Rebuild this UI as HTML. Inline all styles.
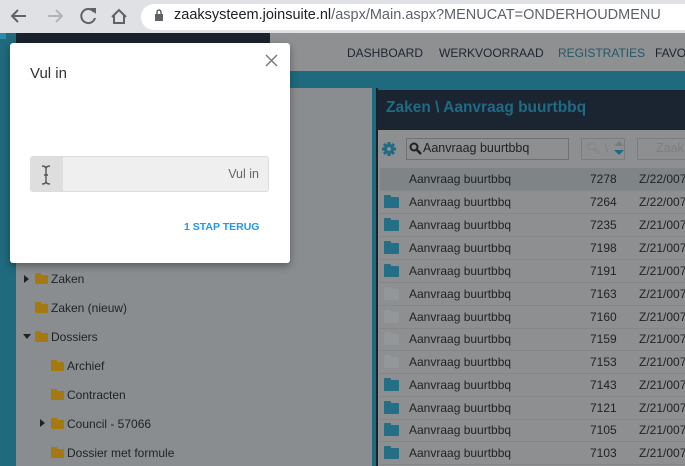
<!DOCTYPE html>
<html><head><style>
*{margin:0;padding:0;box-sizing:border-box}
body{width:685px;height:466px;overflow:hidden;font-family:"Liberation Sans",sans-serif;position:relative;background:#8e8f90}
.abs{position:absolute}
.nav{font-size:12px;color:#1c2530;top:46px}
.row{position:absolute;left:380px;width:305px;height:23px;border-bottom:1px solid #858688;font-size:12px;color:#1e2225}
.row span{position:absolute;top:4px}
.fold{position:absolute;left:4px;top:6px;width:15px;height:11px;background:#246e86;border-radius:1px}
.fold:before{content:"";position:absolute;left:0;top:-2px;width:7px;height:3px;background:inherit;border-radius:1px 1px 0 0}
.g{background:#94979a}
.tree{position:absolute;font-size:12px;color:#1e2225}
.tf{position:absolute;width:13px;height:9px;background:#a47a10;border-radius:1px}
.tf:before{content:"";position:absolute;left:0;top:-2px;width:6px;height:3px;background:#a47a10}
.tri{position:absolute;width:0;height:0}
</style></head><body>
<div class="abs" style="left:0;top:0;width:685px;height:33px;background:#dfe1e4"></div>
<div class="abs" style="left:141px;top:4px;width:560px;height:26px;background:#fff;border-radius:13px"></div>
<svg class="abs" style="left:0;top:0" width="140" height="33" viewBox="0 0 140 33">
<path d="M26 16H12M18 10l-6 6 6 6" stroke="#5f6368" stroke-width="2" fill="none"/>
<path d="M48 16h14M56 10l6 6-6 6" stroke="#b0b3b7" stroke-width="2" fill="none"/>
<path d="M94 12a7 7 0 1 0 1 6" stroke="#5f6368" stroke-width="2" fill="none"/><path d="M90 8h6v6z" fill="#5f6368"/>
<path d="M112 17l7-7 7 7M114 15v8h10v-8" stroke="#5f6368" stroke-width="2" fill="none"/>
</svg>
<svg class="abs" style="left:154px;top:9px" width="10" height="13"><rect x="1" y="5" width="8" height="7" fill="#5f6368"/><path d="M3 5V3a2 2 0 0 1 4 0v2" stroke="#5f6368" stroke-width="1.5" fill="none"/></svg>
<div class="abs" style="left:174px;top:7px;font-size:14.5px;color:#202124;white-space:nowrap">zaaksysteem.joinsuite.nl<span style="color:#5f6368">/aspx/Main.aspx?MENUCAT=ONDERHOUDMENU</span></div>

<div class="abs" style="left:0;top:33px;width:16px;height:433px;background:#1f6a7d"></div>
<div class="abs" style="left:0;top:33px;width:6px;height:6px;background:#2b8ab0"></div>
<div class="abs" style="left:16px;top:33px;width:254px;height:40px;background:#1a222d"></div>
<div class="abs" style="left:270px;top:33px;width:415px;height:38px;background:#8f9091"></div>
<div class="abs nav" style="left:347px">DASHBOARD</div>
<div class="abs nav" style="left:439px">WERKVOORRAAD</div>
<div class="abs nav" style="left:558px;color:#24586a">REGISTRATIES</div>
<div class="abs nav" style="left:655px">FAVO</div>
<div class="abs" style="left:16px;top:71px;width:669px;height:19px;background:#1f6a7d"></div>
<div class="abs" style="left:16px;top:88px;width:356px;height:378px;background:#8a8d90"></div>
<div class="abs" style="left:372px;top:88px;width:6px;height:378px;background:#1f6a7d;border-right:2px solid #1a222d"></div>
<div class="abs" style="left:378px;top:90px;width:307px;height:40px;background:#1b2532"></div>
<div class="abs" style="left:386px;top:99px;font-size:15.5px;font-weight:bold;color:#1f6a85">Zaken \ Aanvraag buurtbbq</div>
<div class="abs" style="left:378px;top:130px;width:307px;height:38px;background:#8d8f91"></div>
<svg class="abs" style="left:381px;top:141px" width="16" height="16" viewBox="0 0 16 16"><g stroke="#1f6a85" stroke-width="3"><path d="M8 1v14M1 8h14M3 3l10 10M13 3L3 13"/></g><circle cx="8" cy="8" r="5" fill="#1f6a85"/><circle cx="8" cy="8" r="2" fill="#8d8f91"/></svg>
<div class="abs" style="left:406px;top:138px;width:163px;height:22px;border:1px solid #6f7275;background:#8d8f91;font-size:12.5px;color:#1e2225;padding:2px 0 0 16px">Aanvraag buurtbbq</div>
<svg class="abs" style="left:409px;top:142px" width="13" height="13"><circle cx="5" cy="5" r="3.5" stroke="#1e2225" stroke-width="2" fill="none"/><path d="M8 8l4 4" stroke="#1e2225" stroke-width="2.5"/></svg>
<div class="abs" style="left:581px;top:138px;width:44px;height:22px;border:1px solid #7a7d80"></div>
<div class="abs" style="left:586px;top:141px;font-size:12px;color:#7c7f82">🔍︎ \</div>
<div class="abs tri" style="left:614px;top:141px;border:5px solid transparent;border-bottom-color:#7a7d80;border-top:0"></div>
<div class="abs tri" style="left:614px;top:150px;border:5px solid transparent;border-top-color:#1f6a85;border-bottom:0"></div>
<div class="abs" style="left:637px;top:138px;width:50px;height:22px;border:1px solid #7a7d80;font-size:12.5px;color:#7c7f82;padding:2px 0 0 18px">Zaak</div>

<div class="row" style="top:168px;background:#7f8487"><span style="left:29px">Aanvraag buurtbbq</span><span style="left:210px">7278</span><span style="left:259px">Z/22/007</span></div>
<div class="row" style="top:191px"><i class="fold"></i><span style="left:29px">Aanvraag buurtbbq</span><span style="left:210px">7264</span><span style="left:259px">Z/22/007</span></div>
<div class="row" style="top:214px"><i class="fold"></i><span style="left:29px">Aanvraag buurtbbq</span><span style="left:210px">7235</span><span style="left:259px">Z/21/007</span></div>
<div class="row" style="top:237px"><i class="fold"></i><span style="left:29px">Aanvraag buurtbbq</span><span style="left:210px">7198</span><span style="left:259px">Z/21/007</span></div>
<div class="row" style="top:260px"><i class="fold"></i><span style="left:29px">Aanvraag buurtbbq</span><span style="left:210px">7191</span><span style="left:259px">Z/21/007</span></div>
<div class="row" style="top:283px"><i class="fold g"></i><span style="left:29px">Aanvraag buurtbbq</span><span style="left:210px">7163</span><span style="left:259px">Z/21/007</span></div>
<div class="row" style="top:306px"><i class="fold g"></i><span style="left:29px">Aanvraag buurtbbq</span><span style="left:210px">7160</span><span style="left:259px">Z/21/007</span></div>
<div class="row" style="top:328px"><i class="fold g"></i><span style="left:29px">Aanvraag buurtbbq</span><span style="left:210px">7159</span><span style="left:259px">Z/21/007</span></div>
<div class="row" style="top:351px"><i class="fold g"></i><span style="left:29px">Aanvraag buurtbbq</span><span style="left:210px">7153</span><span style="left:259px">Z/21/007</span></div>
<div class="row" style="top:374px"><i class="fold"></i><span style="left:29px">Aanvraag buurtbbq</span><span style="left:210px">7143</span><span style="left:259px">Z/21/007</span></div>
<div class="row" style="top:397px"><i class="fold"></i><span style="left:29px">Aanvraag buurtbbq</span><span style="left:210px">7121</span><span style="left:259px">Z/21/007</span></div>
<div class="row" style="top:419px"><i class="fold"></i><span style="left:29px">Aanvraag buurtbbq</span><span style="left:210px">7105</span><span style="left:259px">Z/21/007</span></div>
<div class="row" style="top:442px"><i class="fold"></i><span style="left:29px">Aanvraag buurtbbq</span><span style="left:210px">7103</span><span style="left:259px">Z/21/007</span></div>

<div class="tri" style="left:24px;top:275px;border:4px solid transparent;border-left:5px solid #1e2225;border-right:0"></div>
<i class="tf" style="left:35px;top:275px"></i><div class="tree" style="left:51px;top:272px">Zaken</div>
<i class="tf" style="left:35px;top:304px"></i><div class="tree" style="left:51px;top:301px">Zaken (nieuw)</div>
<div class="tri" style="left:23px;top:334px;border:4px solid transparent;border-top:5px solid #1e2225;border-bottom:0"></div>
<i class="tf" style="left:35px;top:333px"></i><div class="tree" style="left:51px;top:330px">Dossiers</div>
<i class="tf" style="left:51px;top:362px"></i><div class="tree" style="left:67px;top:359px">Archief</div>
<i class="tf" style="left:51px;top:391px"></i><div class="tree" style="left:67px;top:388px">Contracten</div>
<div class="tri" style="left:40px;top:419px;border:4px solid transparent;border-left:5px solid #1e2225;border-right:0"></div>
<i class="tf" style="left:51px;top:420px"></i><div class="tree" style="left:67px;top:417px">Council - 57066</div>
<i class="tf" style="left:51px;top:449px"></i><div class="tree" style="left:67px;top:446px">Dossier met formule</div>

<div class="abs" style="left:10px;top:43px;width:280px;height:220px;background:#fff;border-radius:3px;box-shadow:0 3px 8px rgba(0,0,0,.35)"></div>
<svg class="abs" style="left:265px;top:54px" width="13" height="13"><path d="M1 1l11 11M12 1L1 12" stroke="#777" stroke-width="1.4"/></svg>
<div class="abs" style="left:30px;top:65px;font-size:15px;color:#333">Vul in</div>
<div class="abs" style="left:30px;top:156px;width:239px;height:36px;background:#efefef;border:1px solid #ddd;border-radius:3px;overflow:hidden">
<div style="position:absolute;left:0;top:0;width:32px;height:36px;background:#dedede"></div>
<div style="position:absolute;right:9px;top:10px;font-size:12.5px;color:#666">Vul in</div></div>
<svg class="abs" style="left:40px;top:164px" width="12" height="22"><path d="M2 2q4 0 4 3v12q0 3-4 3M10 2q-4 0-4 3v12q0 3 4 3M4 11h4" stroke="#555" stroke-width="1.4" fill="none"/></svg>
<div class="abs" style="left:184px;top:221px;font-size:10.5px;font-weight:bold;color:#2196f3">1 STAP TERUG</div>
</body></html>
